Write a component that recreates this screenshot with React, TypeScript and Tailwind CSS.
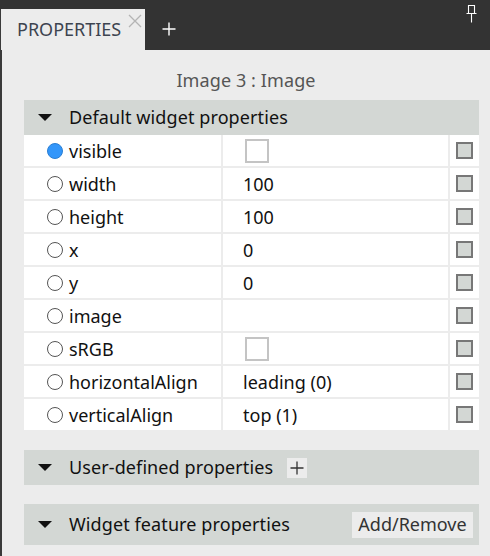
import React from "react";

const rows: { name: string; value?: string; check?: boolean; active?: boolean }[] = [
  { name: "visible", check: true, active: true },
  { name: "width", value: "100" },
  { name: "height", value: "100" },
  { name: "x", value: "0" },
  { name: "y", value: "0" },
  { name: "image", value: "" },
  { name: "sRGB", check: true },
  { name: "horizontalAlign", value: "leading (0)" },
  { name: "verticalAlign", value: "top (1)" },
];

function Tri() {
  return (
    <svg width="14" height="8" viewBox="0 0 14 8" className="shrink-0">
      <polygon points="0,0 14,0 7,7" fill="#111" />
    </svg>
  );
}

function Header({ title, children, h }: { title: string; children?: React.ReactNode; h: string }) {
  return (
    <div className={`flex items-center bg-[#d3d7d4] ${h}`}>
      <div className="w-[45px] flex justify-end pr-[17px]">
        <Tri />
      </div>
      <span className="text-[18px] text-[#111] tracking-[0.1px]">{title}</span>
      {children}
    </div>
  );
}

export default function App() {
  return (
    <div
      className="w-[490px] h-[556px] bg-[#ececec] flex flex-col overflow-hidden"
      style={{ fontFamily: '"Noto Sans", "Open Sans", sans-serif' }}
    >
      <div className="h-[50px] bg-[#333333] flex items-end shrink-0">
        <div className="relative w-[145px] h-[41px] bg-[#ececec] border-l border-[#3a3a3a]">
          <span className="absolute left-[16px] top-[8px] text-[18px] leading-[24px] text-[#3d4450]">PROPERTIES</span>
          <svg width="14" height="14" viewBox="0 0 14 14" className="absolute left-[127px] top-[5px]">
            <path d="M1 1 L13 13 M13 1 L1 13" stroke="#b4b4b4" strokeWidth="1.3" />
          </svg>
        </div>
        <svg width="14" height="14" viewBox="0 0 14 14" className="ml-[17px] mb-[14px]">
          <path d="M7 0.5 V13.5 M0.5 7 H13.5" stroke="#fff" strokeWidth="1.4" />
        </svg>
        <svg width="11" height="18" viewBox="0 0 11 18" className="ml-auto mr-[13px] self-start mt-[5px]">
          <path d="M2.5 0.5 H8.5 V8.5 H2.5 Z M0.5 8.5 H10.5 M5.5 8.5 V17.5" stroke="#fff" strokeWidth="1.1" fill="none" />
        </svg>
      </div>
      <div className="flex-1 border-l-2 border-[#3a3a3a] flex flex-col">
        <div className="h-[50px] flex items-center justify-center text-[18px] text-[#555] pt-[10px] tracking-[0.1px]">
          Image 3 : Image
        </div>
        <div className="ml-[22px] mr-[11px] flex flex-col">
          <Header title="Default widget properties" h="h-[35px]" />
          <div className="flex flex-col gap-[2px]">
            {rows.map((r) => (
              <div key={r.name} className="flex gap-[2px] h-[31px]">
                <div className="w-[197px] bg-white flex items-center">
                  <div
                    className={`ml-[23px] w-[16px] h-[16px] rounded-full border-[1.5px] ${
                      r.active ? "bg-[#3296fa] border-[#2a7fd4]" : "bg-white border-[#555]"
                    }`}
                  />
                  <span className="ml-[6px] pt-[2px] text-[18px] text-[#111]">{r.name}</span>
                </div>
                <div className="w-[225px] bg-white flex items-center">
                  {r.check ? (
                    <div className="ml-[22px] w-[24px] h-[24px] border-2 border-[#c4c4c4] bg-white" />
                  ) : (
                    <span className="ml-[20px] pt-[2px] text-[18px] text-[#111]">{r.value}</span>
                  )}
                </div>
                <div className="w-[29px] bg-white flex items-center justify-center">
                  <div className="w-[17px] h-[17px] border-2 border-[#777] bg-[#d3d7d4]" />
                </div>
              </div>
            ))}
          </div>
          <div className="h-[20px]" />
          <Header title="User-defined properties" h="h-[35px]">
            <div className="ml-[14px] w-[20px] h-[20px] bg-[#ececec] flex items-center justify-center">
              <svg width="14" height="14" viewBox="0 0 14 14">
                <path d="M7 0.5 V13.5 M0.5 7 H13.5" stroke="#333" strokeWidth="1.3" />
              </svg>
            </div>
          </Header>
          <div className="h-[19px]" />
          <Header title="Widget feature properties" h="h-[41px]">
            <div className="ml-auto mr-[6px] h-[26px] w-[121px] bg-[#ececec] flex items-center justify-center text-[18px] text-[#333]">
              Add/Remove
            </div>
          </Header>
        </div>
      </div>
    </div>
  );
}
